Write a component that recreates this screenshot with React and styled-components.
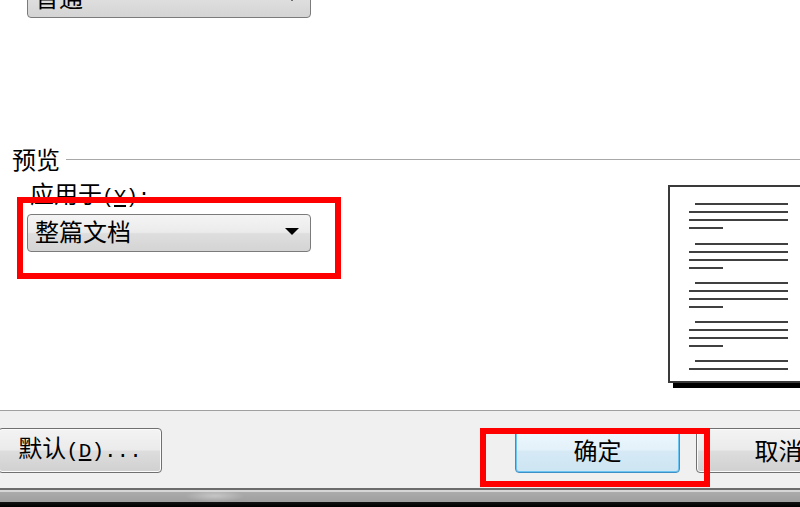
import React from 'react';
import styled, { createGlobalStyle } from 'styled-components';

const GlobalStyle = createGlobalStyle`
  html, body {
    margin: 0;
    padding: 0;
    background: #ffffff;
  }
  body {
    font-family: "Noto Sans CJK SC", "Liberation Sans", sans-serif;
  }
`;

const Dialog = styled.div`
  width: 800px;
  height: 507px;
  overflow: hidden;
  display: flex;
  flex-direction: column;
  color: #000000;
  font-size: 24px;
`;

const Content = styled.div`
  height: 410px;
  flex-shrink: 0;
  background: #ffffff;
  display: flex;
  flex-direction: column;
  overflow: hidden;
`;

const Combo = styled.div`
  box-sizing: border-box;
  width: ${(props) => props.width}px;
  height: 38px;
  flex-shrink: 0;
  margin: ${(props) => props.margin || '0'};
  display: flex;
  align-items: center;
  justify-content: space-between;
  padding: 0 11px 5px 7px;
  border: 1px solid #7b7b7b;
  border-radius: 4px;
  background: linear-gradient(to bottom, #f4f4f4 0%, #ebebeb 48%, #dedede 52%, #d4d4d4 100%);
  line-height: 24px;
  font-size: 24px;
`;

const Caret = styled.span`
  width: 0;
  height: 0;
  border-left: 7px solid transparent;
  border-right: 7px solid transparent;
  border-top: 7px solid #000000;
  margin-top: 2px;
`;

const Legend = styled.div`
  display: flex;
  align-items: center;
  height: 24px;
  margin-top: 129px;
  padding-left: 12px;
  line-height: 24px;
`;

const Rule = styled.div`
  flex: 1;
  height: 1px;
  margin-left: 6px;
  background: #a8a8a8;
`;

const PreviewBody = styled.div`
  display: flex;
  align-items: flex-start;
`;

const LeftCol = styled.div`
  display: flex;
  flex-direction: column;
  align-items: flex-start;
`;

const FieldLabel = styled.div`
  margin: 10px 0 0 30px;
  height: 24px;
  line-height: 24px;
`;

const Latin = styled.span`
  font-family: "Liberation Mono", monospace;
  font-size: ${(props) => props.size || 21}px;
`;

const Mnemonic = styled.span`
  text-decoration: underline;
  text-underline-offset: 2px;
`;

const Highlight = styled.div`
  position: relative;
  flex-shrink: 0;
  margin: ${(props) => props.margin || '0'};
  padding: ${(props) => props.pad};

  &::after {
    content: '';
    position: absolute;
    inset: 0;
    border: 6px solid #ff0000;
    pointer-events: none;
  }
`;

const PageThumb = styled.svg`
  display: block;
  flex-shrink: 0;
  margin-left: auto;
  margin-top: 14px;
`;

const ButtonBar = styled.div`
  box-sizing: border-box;
  height: 78px;
  flex-shrink: 0;
  display: flex;
  align-items: flex-start;
  padding-top: 17px;
  border-top: 1px solid #a0a0a0;
  background: #f0f0f0;
`;

const Button = styled.button`
  box-sizing: border-box;
  flex-shrink: 0;
  width: ${(props) => props.width}px;
  height: 45px;
  margin: ${(props) => props.margin || '0'};
  padding: 0 0 2px;
  font: inherit;
  font-size: 24px;
  line-height: 24px;
  color: #000000;
  text-align: center;
  white-space: nowrap;
  border-radius: 4px;
  border: 1px solid ${(props) => (props.primary ? '#3d8fc6' : '#707070')};
  box-shadow: ${(props) => (props.primary ? 'inset 0 0 0 1px #6cc4f2' : 'inset 0 0 0 1px #fbfbfb')};
  background: ${(props) => (props.primary
    ? 'linear-gradient(to bottom, #f0f8fd 0%, #e3f1fa 48%, #d6eaf6 52%, #cde4f2 100%)'
    : 'linear-gradient(to bottom, #f3f3f3 0%, #ebebeb 48%, #dddddd 52%, #d0d0d0 100%)')};
`;

const StatusStrip = styled.div`
  height: 19px;
  flex-shrink: 0;
  background:
    radial-gradient(ellipse 30px 6px at 215px 8px, rgba(255, 255, 255, 0.35), rgba(255, 255, 255, 0)),
    linear-gradient(to bottom, #6c6c6c 0, #6c6c6c 2px, #d6d6d6 2px, #d6d6d6 4px, #ababab 4px, #9f9f9f 14px, #111111 14px, #000000 19px);
`;

const groups = [18, 58, 97, 136, 175];

const PagePreview = () => (
  <PageThumb width="132" height="204" viewBox="0 0 132 204">
    <rect x="0" y="0" width="132" height="198" fill="#ffffff" />
    <rect x="5" y="198" width="127" height="5" fill="#000000" />
    <rect x="0" y="0" width="132" height="2" fill="#3a3a3a" />
    <rect x="0" y="0" width="2" height="198" fill="#3a3a3a" />
    <rect x="0" y="196" width="132" height="2" fill="#3a3a3a" />
    {groups.map((y, g) => {
      const rows = g === groups.length - 1 ? 2 : 4;
      return Array.from({ length: rows }).map((_, i) => {
        const x = i === 0 ? 27 : 21;
        const end = i === 3 ? 55 : 120;
        return <rect key={`${g}-${i}`} x={x} y={y + i * 8} width={end - x} height="2" fill="#404040" />;
      });
    })}
  </PageThumb>
);

const App = () => (
  <>
    <GlobalStyle />
    <Dialog>
      <Content>
        <Combo width={284} margin="-20px 0 0 27px">
          <span>普通</span>
          <Caret />
        </Combo>
        <Legend>
          预览
          <Rule />
        </Legend>
        <PreviewBody>
          <LeftCol>
            <FieldLabel>
              应用于<Latin size={20}>(<Mnemonic>Y</Mnemonic>):</Latin>
            </FieldLabel>
            <Highlight margin="-8px 0 0 17px" pad="17px 30px 27px 10px">
              <Combo width={284}>
                <span>整篇文档</span>
                <Caret />
              </Combo>
            </Highlight>
          </LeftCol>
          <PagePreview />
        </PreviewBody>
      </Content>
      <ButtonBar>
        <Button width={164} margin="0 0 0 -2px">
          默认<Latin>(<Mnemonic>D</Mnemonic>)...</Latin>
        </Button>
        <Highlight margin="0 0 0 318px" pad="0 30px 14px 35px">
          <Button width={165} primary>确定</Button>
        </Highlight>
        <Button width={165} margin="0 0 0 -14px">取消</Button>
      </ButtonBar>
      <StatusStrip />
    </Dialog>
  </>
);

export default App;
